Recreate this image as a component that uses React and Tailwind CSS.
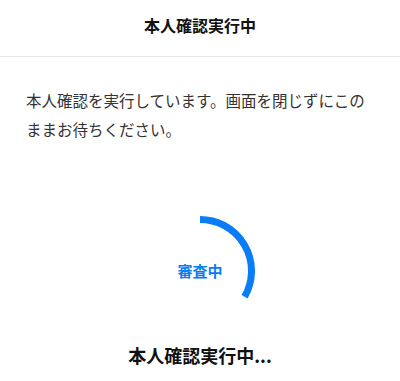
import React from 'react';

const font = { fontFamily: '"Noto Sans CJK JP", "Noto Sans", sans-serif' };

const Spinner = () => (
  <div className="relative w-[110px] h-[110px]">
    <svg width="110" height="110" viewBox="0 0 110 110" className="absolute inset-0">
      <path d="M55 3.5 A51.5 51.5 0 0 1 99.6 80.75" fill="none" stroke="#0a7cf5" strokeWidth="7" />
    </svg>
    <div className="absolute inset-0 flex items-center justify-center text-[15px] font-bold text-[#0a7cf5]">
      審査中
    </div>
  </div>
);

export default function App() {
  return (
    <div className="w-[400px] h-[381px] bg-white flex flex-col overflow-hidden" style={font}>
      <header className="h-[57px] flex items-center justify-center border-b border-[#e6e6e6] shrink-0">
        <h1 className="text-[16px] font-bold text-[#111] -mt-[6px]">本人確認実行中</h1>
      </header>
      <main className="flex flex-col">
        <p className="px-[26px] pt-[29px] text-[15.5px] leading-[29px] text-[#333]">
          本人確認を実行しています。画面を閉じずにこのままお待ちください。
        </p>
        <div className="flex flex-col items-center mt-[72px]">
          <Spinner />
          <p className="mt-[15px] text-[18px] leading-[28px] font-bold text-[#111]">本人確認実行中...</p>
        </div>
      </main>
    </div>
  );
}
